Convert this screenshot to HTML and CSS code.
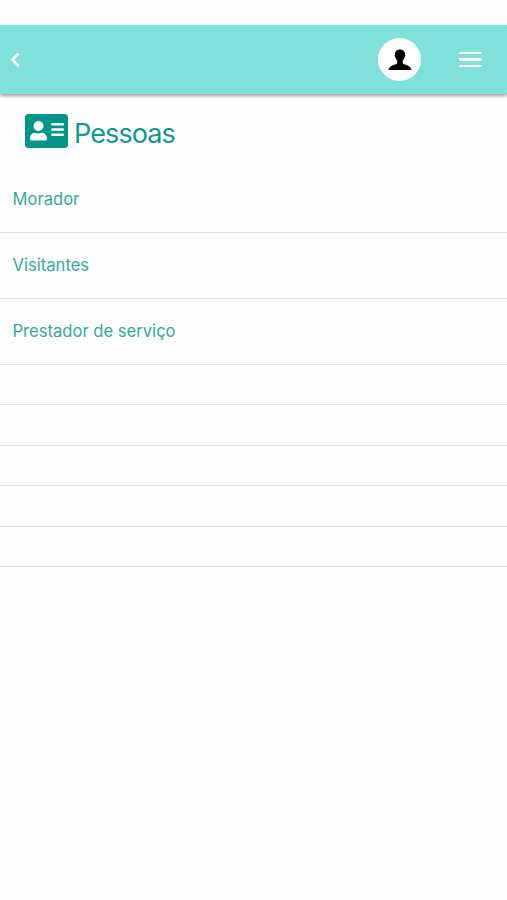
FILE: index.html
```html
<!DOCTYPE html>
<html lang="pt-BR">
<head>
    <meta charset="UTF-8">
    <meta name="viewport" content="width=device-width, initial-scale=1.0">
    <title>Pessoas</title>
    <link rel="stylesheet" href="styles.css">
</head>
<body>

<header>
    <button class="btn-back" aria-label="Voltar">
        <svg width="12" height="18" viewBox="0 0 12 18"><path d="M9.5 2.5 L3.5 8.8 L9.5 15"/></svg>
    </button>
    <div class="header-actions">
        <div class="avatar">
            <svg width="24" height="22" viewBox="0 0 24 22">
                <path d="M12 0.5C8.7 0.5 6.7 2.6 7 5.7C6.3 6 6.6 8.1 7.6 8.5C8 10 8.6 11 9.3 11.7V14.2C8.5 16 1.2 15.6 0.5 21H23.5C22.8 15.6 15.5 16 14.7 14.2V11.7C15.4 11 16 10 16.4 8.5C17.4 8.1 17.7 6 17 5.7C17.3 2.6 15.3 0.5 12 0.5Z"/>
            </svg>
        </div>
        <button class="btn-menu" aria-label="Menu">
            <span></span>
            <span></span>
            <span></span>
        </button>
    </div>
</header>

<main>
    <!-- Page Title -->
    <div class="page-title">
        <svg width="43" height="34" viewBox="0 0 43 34">
            <rect class="card" width="43" height="34" rx="3.5"/>
            <circle cx="13.5" cy="12" r="5"/>
            <path d="M5 25.2C5 21 7.4 18.8 10 18.8C12.2 19.8 14.8 19.8 17 18.8C19.6 18.8 22 21 22 25.2Q22 26.5 20.6 26.5H6.4Q5 26.5 5 25.2Z"/>
            <rect x="26.3" y="9" width="12.5" height="2.5" rx="0.6"/>
            <rect x="26.3" y="14.3" width="12.5" height="2.5" rx="0.6"/>
            <rect x="26.3" y="19.6" width="12.5" height="2.5" rx="0.6"/>
        </svg>
        <h1>Pessoas</h1>
    </div>

    <!-- People List -->
    <ul class="people-list">
        <li>Morador</li>
        <li>Visitantes</li>
        <li>Prestador de serviço</li>
        <li class="empty"></li>
        <li class="empty"></li>
        <li class="empty"></li>
        <li class="empty"></li>
        <li class="empty"></li>
    </ul>
</main>

</body>
</html>
```
FILE: styles.css
```css
* {
    margin: 0;
    padding: 0;
    box-sizing: border-box;
}

body {
    font-family: 'Inter', sans-serif;
    background-color: #fefefe;
    padding-top: 25px;
}

header {
    display: flex;
    align-items: center;
    justify-content: space-between;
    height: 69px;
    padding: 0 25px 0 9px;
    background-color: #80e1da;
    box-shadow: 0 2px 3px rgba(0, 0, 0, 0.38);
}

button {
    background: none;
    border: none;
    cursor: pointer;
}

.btn-back svg {
    display: block;
    fill: none;
    stroke: #fff;
    stroke-width: 2.6;
}

.header-actions {
    display: flex;
    align-items: center;
    gap: 38px;
}

.avatar {
    display: flex;
    align-items: center;
    justify-content: center;
    width: 43px;
    height: 43px;
    border-radius: 50%;
    background-color: #fff;
}

.btn-menu {
    display: flex;
    flex-direction: column;
    gap: 4px;
}

.btn-menu span {
    width: 23px;
    height: 2.5px;
    border-radius: 1px;
    background-color: #fff;
}

.page-title {
    display: flex;
    align-items: center;
    gap: 6px;
    height: 73px;
    padding-left: 25px;
}

.page-title svg {
    fill: #fff;
}

.page-title .card {
    fill: #009688;
}

h1 {
    margin-top: 5px;
    font-size: 27px;
    font-weight: 400;
    letter-spacing: -0.9px;
    color: #109a8d;
}

.people-list {
    list-style: none;
}

.people-list li {
    display: flex;
    align-items: center;
    height: 66px;
    padding: 0 0 1px 12.5px;
    border-bottom: 1px solid #e2e2e2;
    font-size: 16.6px;
    color: #33ab9a;
}

.people-list .empty {
    height: 40.4px;
}
```
